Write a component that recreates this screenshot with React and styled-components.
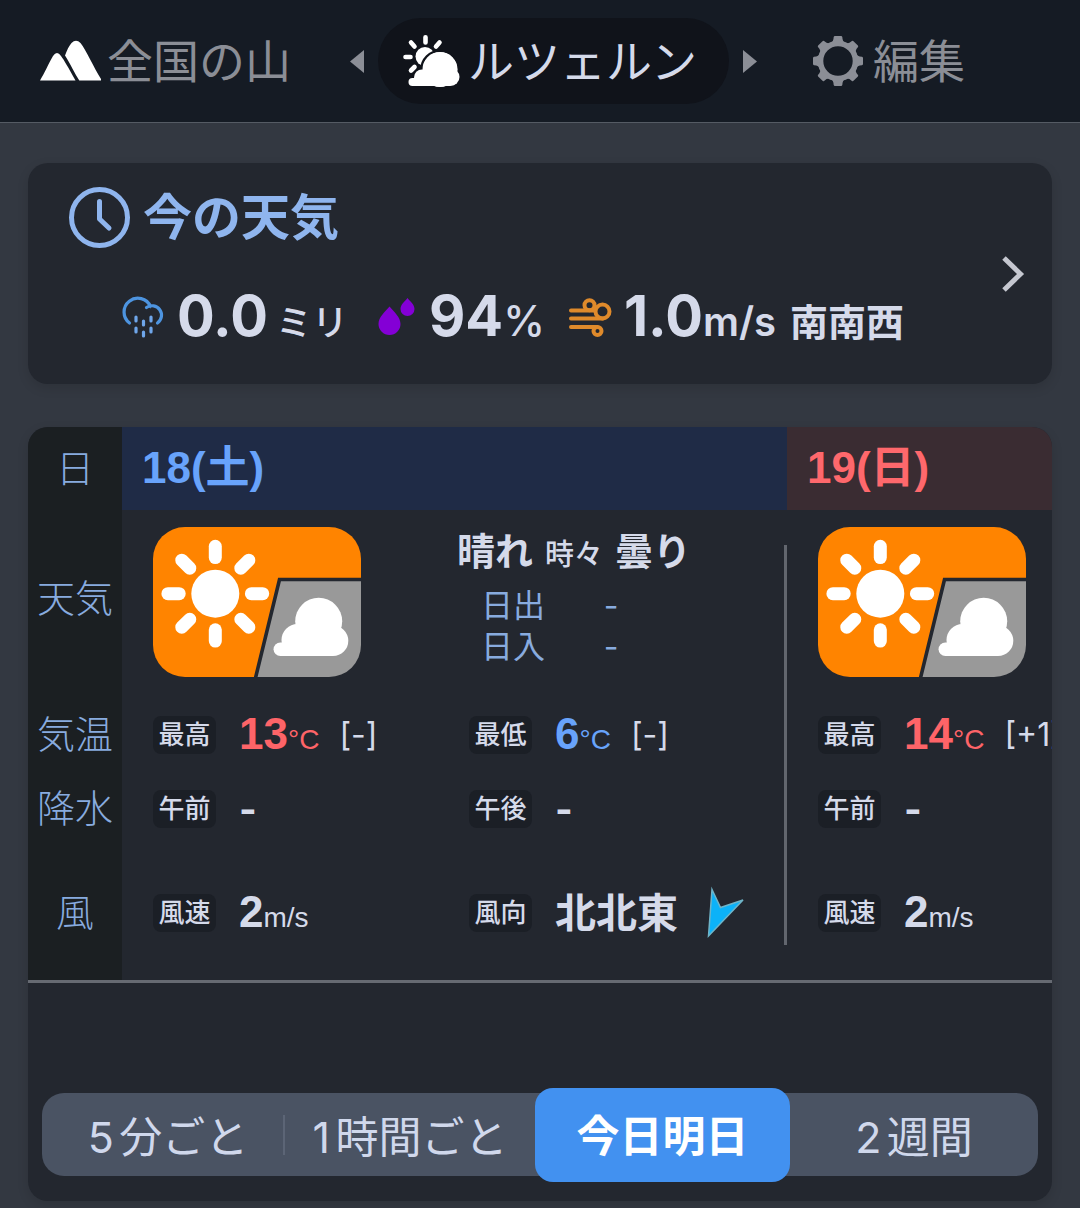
import React from 'react';
import styled, { createGlobalStyle } from 'styled-components';

const GlobalStyle = createGlobalStyle`
	* {
		box-sizing: border-box;
	}

	body {
		margin: 0;
		background: #333841;
		color: #d5daea;
		font-family: Inter, 'Noto Sans CJK JP', sans-serif;
	}

	button {
		padding: 0;
		border: 0;
		background: none;
		color: inherit;
		font: inherit;
		cursor: pointer;
	}

	a {
		color: inherit;
		text-decoration: none;
	}

	svg {
		display: block;
		flex: none;
		overflow: visible;
	}
`;

const Header = styled.header`
	display: flex;
	align-items: center;
	height: 123px;
	padding: 0 40px;
	background: #151b24;
	border-bottom: 1px solid #555b64;
	font-size: 46px;
	line-height: 60px;
	white-space: nowrap;
`;

const NavLink = styled.a`
	display: flex;
	align-items: center;
	gap: ${props => props.$gap}px;
	color: #8b8e96;
`;

const Switcher = styled.div`
	display: flex;
	align-items: center;
	gap: 14px;
	margin: 0 56px 0 59px;
`;

const Place = styled.button`
	display: flex;
	align-items: center;
	gap: 8px;
	height: 86px;
	padding: 0 32px 0 25px;
	border-radius: 43px;
	background: #10131a;
	color: #d5daea;
`;

const Main = styled.main`
	display: flex;
	flex-direction: column;
	gap: 43px;
	padding: 40px 28px 7px;
`;

const NowCard = styled.a`
	display: flex;
	align-items: center;
	padding: 0 28px 0 41px;
	border-radius: 20px;
	background: #23272f;
	box-shadow: 0 4px 12px rgba(0, 0, 0, 0.12);
`;

const NowBody = styled.div`
	flex: 1;
	padding: 24px 0 37px;
`;

const NowTitle = styled.h2`
	display: flex;
	align-items: center;
	gap: 13px;
	height: 61px;
	margin: 0 0 39px;
	color: #8fb5ee;
	font-size: 49px;
	font-weight: 700;
	line-height: 64px;
`;

const NowRow = styled.div`
	display: flex;
	align-items: center;
	height: 60px;
	padding-left: 53px;
	white-space: nowrap;
`;

const Reading = styled.p`
	margin: 0 ${props => props.$after}px 0 ${props => props.$before}px;
	padding-top: 4px;
	font-size: 38px;
	font-weight: 700;
	line-height: 60px;

	strong {
		font-size: 56px;
		font-weight: 700;
	}
`;

const UnitKana = styled.span`
	margin-left: 8px;
	font-size: 36px;
	font-weight: 500;
`;

const UnitLatin = styled.span`
	font-size: ${props => props.$size}px;
	font-weight: ${props => props.$weight};
`;

const WindFrom = styled.span`
	margin-left: 14px;
`;

const ForecastCard = styled.section`
	overflow: hidden;
	border-radius: 20px;
	background: #23272f;
	box-shadow: 0 4px 12px rgba(0, 0, 0, 0.12);
`;

const Scroller = styled.div`
	overflow-x: auto;
	border-bottom: 3px solid #666a72;
	scrollbar-width: none;
`;

const Table = styled.table`
	width: max-content;
	border-collapse: collapse;
	table-layout: fixed;
	white-space: nowrap;

	th,
	td {
		padding: 0;
		text-align: left;
	}
`;

const Row = styled.tr`
	height: ${props => props.$height}px;
`;

const RowLabel = styled.th`
	&& {
		position: sticky;
		left: 0;
		width: 94px;
		min-width: 94px;
		padding-bottom: ${props => (props.$raised ? 12 : 2)}px;
		background: #1b1f22;
		color: #88abdf;
		font-size: 38px;
		font-weight: 300;
		line-height: 48px;
		text-align: center;
	}
`;

const DayHead = styled.th`
	&& {
		width: 665px;
		min-width: 665px;
		padding: 0 0 2px 20px;
		background: ${props => (props.$tone === 'sat' ? '#1f2b46' : '#3a2c32')};
		color: ${props => (props.$tone === 'sat' ? '#68a3fb' : '#fe686c')};
		font-family: 'Liberation Sans', 'Noto Sans CJK JP', sans-serif;
		font-size: 44px;
		font-weight: 700;
		line-height: 56px;
	}
`;

// the rule between two days leaves a gap above the first row and below the last
const DayCell = styled.td`
	&& {
		padding-left: 31px;
		background-image: linear-gradient(#62666e, #62666e);
		background-repeat: no-repeat;
		background-position: right ${props => (props.$edge === 'top' ? 'bottom' : 'top')};
		background-size: 3px ${props => (props.$edge ? 'calc(100% - 35px)' : '100%')};
	}
`;

const Halves = styled.div`
	display: grid;
	grid-template-columns: 316px 1fr;
	align-items: center;
`;

const Half = styled.div`
	display: flex;
	align-items: center;
`;

const Tag = styled.span`
	flex: none;
	width: 63px;
	margin-right: 23px;
	border-radius: 8px;
	background: #1b1f26;
	font-size: 26px;
	font-weight: 500;
	line-height: 38px;
	text-align: center;
`;

const Value = styled.span`
	padding-top: 4px;
	color: ${props => props.$color || 'inherit'};
	font-family: 'Liberation Sans', 'Noto Sans CJK JP', sans-serif;
	font-size: 44px;
	font-weight: 700;
	line-height: 48px;

	small {
		font-size: 28px;
		font-weight: 400;
	}
`;

const Dash = styled.span`
	font-size: 38px;
	font-weight: 700;
	line-height: 44px;
`;

const Direction = styled.span`
	margin-right: 27px;
	font-size: 41px;
	font-weight: 700;
	line-height: 48px;
`;

const Diff = styled.span`
	margin-left: 20px;
	font-size: 32px;
	line-height: 48px;
`;

const Sky = styled.div`
	display: flex;
	align-items: center;
	padding-bottom: 4px;
`;

const SkyText = styled.div`
	flex: 1;
	padding-bottom: 14px;
	font-size: 38px;
	font-weight: 700;
	line-height: 56px;
	text-align: center;

	small {
		margin: 0 12px;
		font-size: 29px;
		font-weight: 500;
	}
`;

const SunTimes = styled.dl`
	display: grid;
	grid-template-columns: 66px 112px;
	column-gap: 8px;
	justify-content: center;
	margin: 2px 0 0;
	color: #88abdf;
	font-size: 32px;
	font-weight: 400;
	line-height: 41px;
	text-align: center;

	dt {
		text-align: left;
	}

	dd {
		margin: 0;
	}
`;

const Tabs = styled.div`
	display: grid;
	grid-template-columns: 243fr 250fr 255fr 248fr;
	margin: 110px 14px 25px;
	border-radius: 22px;
	background: #4a5363;
	font-size: 43px;
	line-height: 83px;
	text-autospace: normal;
	white-space: nowrap;
`;

const Tab = styled.button`
	&& {
		height: ${props => (props.$active ? 94 : 83)}px;
		margin: ${props => (props.$active ? '-5px 0 -6px' : '0')};
		padding-top: 3px;
		border-radius: 18px;
		background: ${props => (props.$active ? '#4291f0' : 'none')};
		color: ${props => (props.$active ? '#ffffff' : '#d0d8ec')};
		font-weight: ${props => (props.$active ? 700 : 400)};
	}
`;

const DividedTab = styled(Tab)`
	&& {
		padding-left: 9px;
		background: linear-gradient(#5c6576, #5c6576) right center / 2px 40px no-repeat;
	}
`;

const MountainIcon = () => (
	<svg width="61" height="40" viewBox="0 0 61 40" fill="#fff" aria-hidden="true">
		<path d="M0 39.500C4 33 9 22 13 15q4-6 8 0c3 4 7 11 14.500 24.500z" />
		<path d="M25 14.500C27 9 29 5 31.500 2q4.500-4.500 9 0C46 9 54 27 61 38v1.500H39.300C35 33 30 22 25 14.500z" />
	</svg>
);

const PartlyIcon = () => (
	<svg width="57" height="52" viewBox="0 0 57 52" fill="#fff" aria-hidden="true">
		<g stroke="#fff" strokeWidth="4.600" strokeLinecap="round">
			<path d="M22.500 2.300v5.200M8 7.500l3.500 4M36.500 7.500L33 11.500M2.500 22h5M8 35.500l3.500-3.500" />
		</g>
		<circle cx="22" cy="21.500" r="9.500" />
		<g stroke="#10131a" strokeWidth="2.600">
			<circle cx="37" cy="34.500" r="18.500" />
			<circle cx="19" cy="42.500" r="8.500" />
		</g>
		<circle cx="37" cy="34.500" r="17.500" />
		<circle cx="19" cy="42.500" r="8" />
		<circle cx="47.500" cy="42" r="9" />
		<path d="M9.500 43H47v8H9.500a4 4 0 010-8z" />
	</svg>
);

const GearIcon = () => (
	<svg width="50" height="50" viewBox="-25 -25 50 50" fill="#8b8e96" aria-hidden="true">
		<circle r="17.500" fill="none" stroke="#8b8e96" strokeWidth="5.600" />
		{[0, 45, 90, 135, 180, 225, 270, 315].map(angle => (
			<path key={angle} d="M-7.500-18q3-1 3.200-6q.3-1 1.200-1h6.200q.9 0 1.200 1q.2 5 3.200 6z" transform={`rotate(${angle})`} />
		))}
	</svg>
);

const ClockIcon = () => (
	<svg width="61" height="61" viewBox="0 0 61 61" fill="none" stroke="#8fb5ee" strokeLinecap="round" strokeLinejoin="round" aria-hidden="true">
		<circle cx="30.500" cy="30.500" r="28" strokeWidth="5" />
		<path d="M30.500 14.500v17.500l9.500 9" strokeWidth="5" />
	</svg>
);

const RainIcon = () => (
	<svg width="42" height="42" viewBox="0 0 42 42" fill="none" stroke="#4d94e0" strokeWidth="3.200" strokeLinecap="round" aria-hidden="true">
		<path d="M7.500 27A13.800 13.800 0 1128.500 10.500M24.500 11.500A9.300 9.300 0 1135.500 27" />
		<path d="M14 21v4M21.500 25v4M29 21v4M14 32v4M21.500 36v4M29 32v4" stroke="#6fa6ea" />
	</svg>
);

const DropsIcon = () => (
	<svg width="37" height="38" viewBox="0 0 37 38" fill="#8400d6" aria-hidden="true">
		<path d="M11.500 8.500C16 14 22.500 19 22.500 26a11 11 0 01-22 0C.5 19 7 14 11.500 8.500z" />
		<path d="M29.500 0c3 4 7 6.500 7 11a7 7 0 01-14 0c0-4.500 4-7 7-11z" />
	</svg>
);

const WindIcon = () => (
	<svg width="43" height="39" viewBox="0 0 43 39" fill="none" stroke="#df8a2b" strokeWidth="4" strokeLinecap="round" aria-hidden="true">
		<path d="M2 12.500h24M2 20.500h32M2 29h26" />
		<circle cx="20.500" cy="7.300" r="5" />
		<circle cx="33.500" cy="13.500" r="7" />
		<circle cx="28.500" cy="33" r="4" />
	</svg>
);

const ChevronIcon = () => (
	<svg width="22" height="36" viewBox="0 0 22 36" fill="none" stroke="#c5c7d0" strokeWidth="5" aria-hidden="true">
		<path d="M2 2l16.500 16L2 34" />
	</svg>
);

const TriangleIcon = ({ flip }) => (
	<svg width="14" height="23" viewBox="0 0 14 23" fill="#8b8e96" aria-hidden="true">
		<path d={flip ? 'M0 0l14 11.500L0 23z' : 'M14 0L0 11.500 14 23z'} />
	</svg>
);

const WindArrow = () => (
	<svg width="42" height="52" viewBox="0 0 42 52" aria-hidden="true">
		<path d="M7 2.500l8.500 18L38 13 3.500 49z" fill="#0cb2f8" stroke="#6fb4c8" strokeWidth="1.500" />
	</svg>
);

const SunnyCloudyTile = ({ id }) => (
	<svg width="208" height="150" viewBox="0 0 208 150" role="img" aria-label="晴れ時々曇り">
		<clipPath id={id}>
			<rect width="208" height="150" rx="32" />
		</clipPath>
		<g clipPath={`url(#${id})`}>
			<path d="M0 0h208v52.500H126.500L102 150H0z" fill="#ff8400" />
			<path d="M212 52.500H126.500L102 153h110z" fill="#999" stroke="#23272f" strokeWidth="3.600" />
		</g>
		<g fill="#fff">
			<circle cx="62.300" cy="66.700" r="24" />
			{[0, 45, 90, 135, 180, 225, 270, 315].map(angle => (
				<rect key={angle} x="55.800" y="12.800" width="13" height="24.300" rx="6.500" transform={`rotate(${angle} 62.300 66.700)`} />
			))}
			<circle cx="165.700" cy="94.300" r="23.500" />
			<circle cx="144.500" cy="113" r="16" />
			<circle cx="180" cy="113.700" r="15.300" />
			<path d="M127.300 115.500H180V129h-52.700a6.700 6.700 0 010-13.500z" />
		</g>
	</svg>
);

const RED = '#fe6468';
const BLUE = '#68a3fb';

const App = () => (
	<>
		<GlobalStyle />
		<Header>
			<NavLink href="#mountains" $gap={6}>
				<MountainIcon />
				全国の山
			</NavLink>
			<Switcher>
				<button type="button" aria-label="前の地点">
					<TriangleIcon />
				</button>
				<Place type="button">
					<PartlyIcon />
					ルツェルン
				</Place>
				<button type="button" aria-label="次の地点">
					<TriangleIcon flip />
				</button>
			</Switcher>
			<NavLink href="#edit" $gap={10}>
				<GearIcon />
				編集
			</NavLink>
		</Header>
		<Main>
			<NowCard href="#now">
				<NowBody>
					<NowTitle>
						<ClockIcon />
						今の天気
					</NowTitle>
					<NowRow>
						<RainIcon />
						<Reading $before={13} $after={30}>
							<strong>0.0</strong>
							<UnitKana>ミリ</UnitKana>
						</Reading>
						<DropsIcon />
						<Reading $before={14} $after={24}>
							<strong>94</strong>
							<UnitLatin $size={42} $weight={500}>%</UnitLatin>
						</Reading>
						<WindIcon />
						<Reading $before={12} $after={0}>
							<strong>1.0</strong>
							<UnitLatin $size={40} $weight={600}>m/s</UnitLatin>
							<WindFrom>南南西</WindFrom>
						</Reading>
					</NowRow>
				</NowBody>
				<ChevronIcon />
			</NowCard>
			<ForecastCard>
				<Scroller>
					<Table>
						<thead>
							<Row $height={83}>
								<RowLabel scope="col">日</RowLabel>
								<DayHead scope="col" $tone="sat">18(土)</DayHead>
								<DayHead scope="col" $tone="sun">19(日)</DayHead>
							</Row>
						</thead>
						<tbody>
							<Row $height={188}>
								<RowLabel scope="row" $raised>天気</RowLabel>
								<DayCell $edge="top">
									<Sky>
										<SunnyCloudyTile id="tile-18" />
										<SkyText>
											晴れ<small>時々</small>曇り
											<SunTimes>
												<dt>日出</dt>
												<dd>-</dd>
												<dt>日入</dt>
												<dd>-</dd>
											</SunTimes>
										</SkyText>
									</Sky>
								</DayCell>
								<DayCell $edge="top">
									<Sky>
										<SunnyCloudyTile id="tile-19" />
									</Sky>
								</DayCell>
							</Row>
							<Row $height={74}>
								<RowLabel scope="row">気温</RowLabel>
								<DayCell>
									<Halves>
										<Half>
											<Tag>最高</Tag>
											<Value $color={RED}>13<small>°C</small></Value>
											<Diff>[-]</Diff>
										</Half>
										<Half>
											<Tag>最低</Tag>
											<Value $color={BLUE}>6<small>°C</small></Value>
											<Diff>[-]</Diff>
										</Half>
									</Halves>
								</DayCell>
								<DayCell>
									<Half>
										<Tag>最高</Tag>
										<Value $color={RED}>14<small>°C</small></Value>
										<Diff>[+1]</Diff>
									</Half>
								</DayCell>
							</Row>
							<Row $height={74}>
								<RowLabel scope="row">降水</RowLabel>
								<DayCell>
									<Halves>
										<Half>
											<Tag>午前</Tag>
											<Dash>-</Dash>
										</Half>
										<Half>
											<Tag>午後</Tag>
											<Dash>-</Dash>
										</Half>
									</Halves>
								</DayCell>
								<DayCell>
									<Half>
										<Tag>午前</Tag>
										<Dash>-</Dash>
									</Half>
								</DayCell>
							</Row>
							<Row $height={134}>
								<RowLabel scope="row">風</RowLabel>
								<DayCell $edge="bottom">
									<Halves>
										<Half>
											<Tag>風速</Tag>
											<Value>2<small>m/s</small></Value>
										</Half>
										<Half>
											<Tag>風向</Tag>
											<Direction>北北東</Direction>
											<WindArrow />
										</Half>
									</Halves>
								</DayCell>
								<DayCell $edge="bottom">
									<Half>
										<Tag>風速</Tag>
										<Value>2<small>m/s</small></Value>
									</Half>
								</DayCell>
							</Row>
						</tbody>
					</Table>
				</Scroller>
				<Tabs role="tablist">
					<DividedTab type="button" role="tab">5分ごと</DividedTab>
					<Tab type="button" role="tab">1時間ごと</Tab>
					<Tab type="button" role="tab" aria-selected="true" $active>今日明日</Tab>
					<Tab type="button" role="tab">2週間</Tab>
				</Tabs>
			</ForecastCard>
		</Main>
	</>
);

export default App;
